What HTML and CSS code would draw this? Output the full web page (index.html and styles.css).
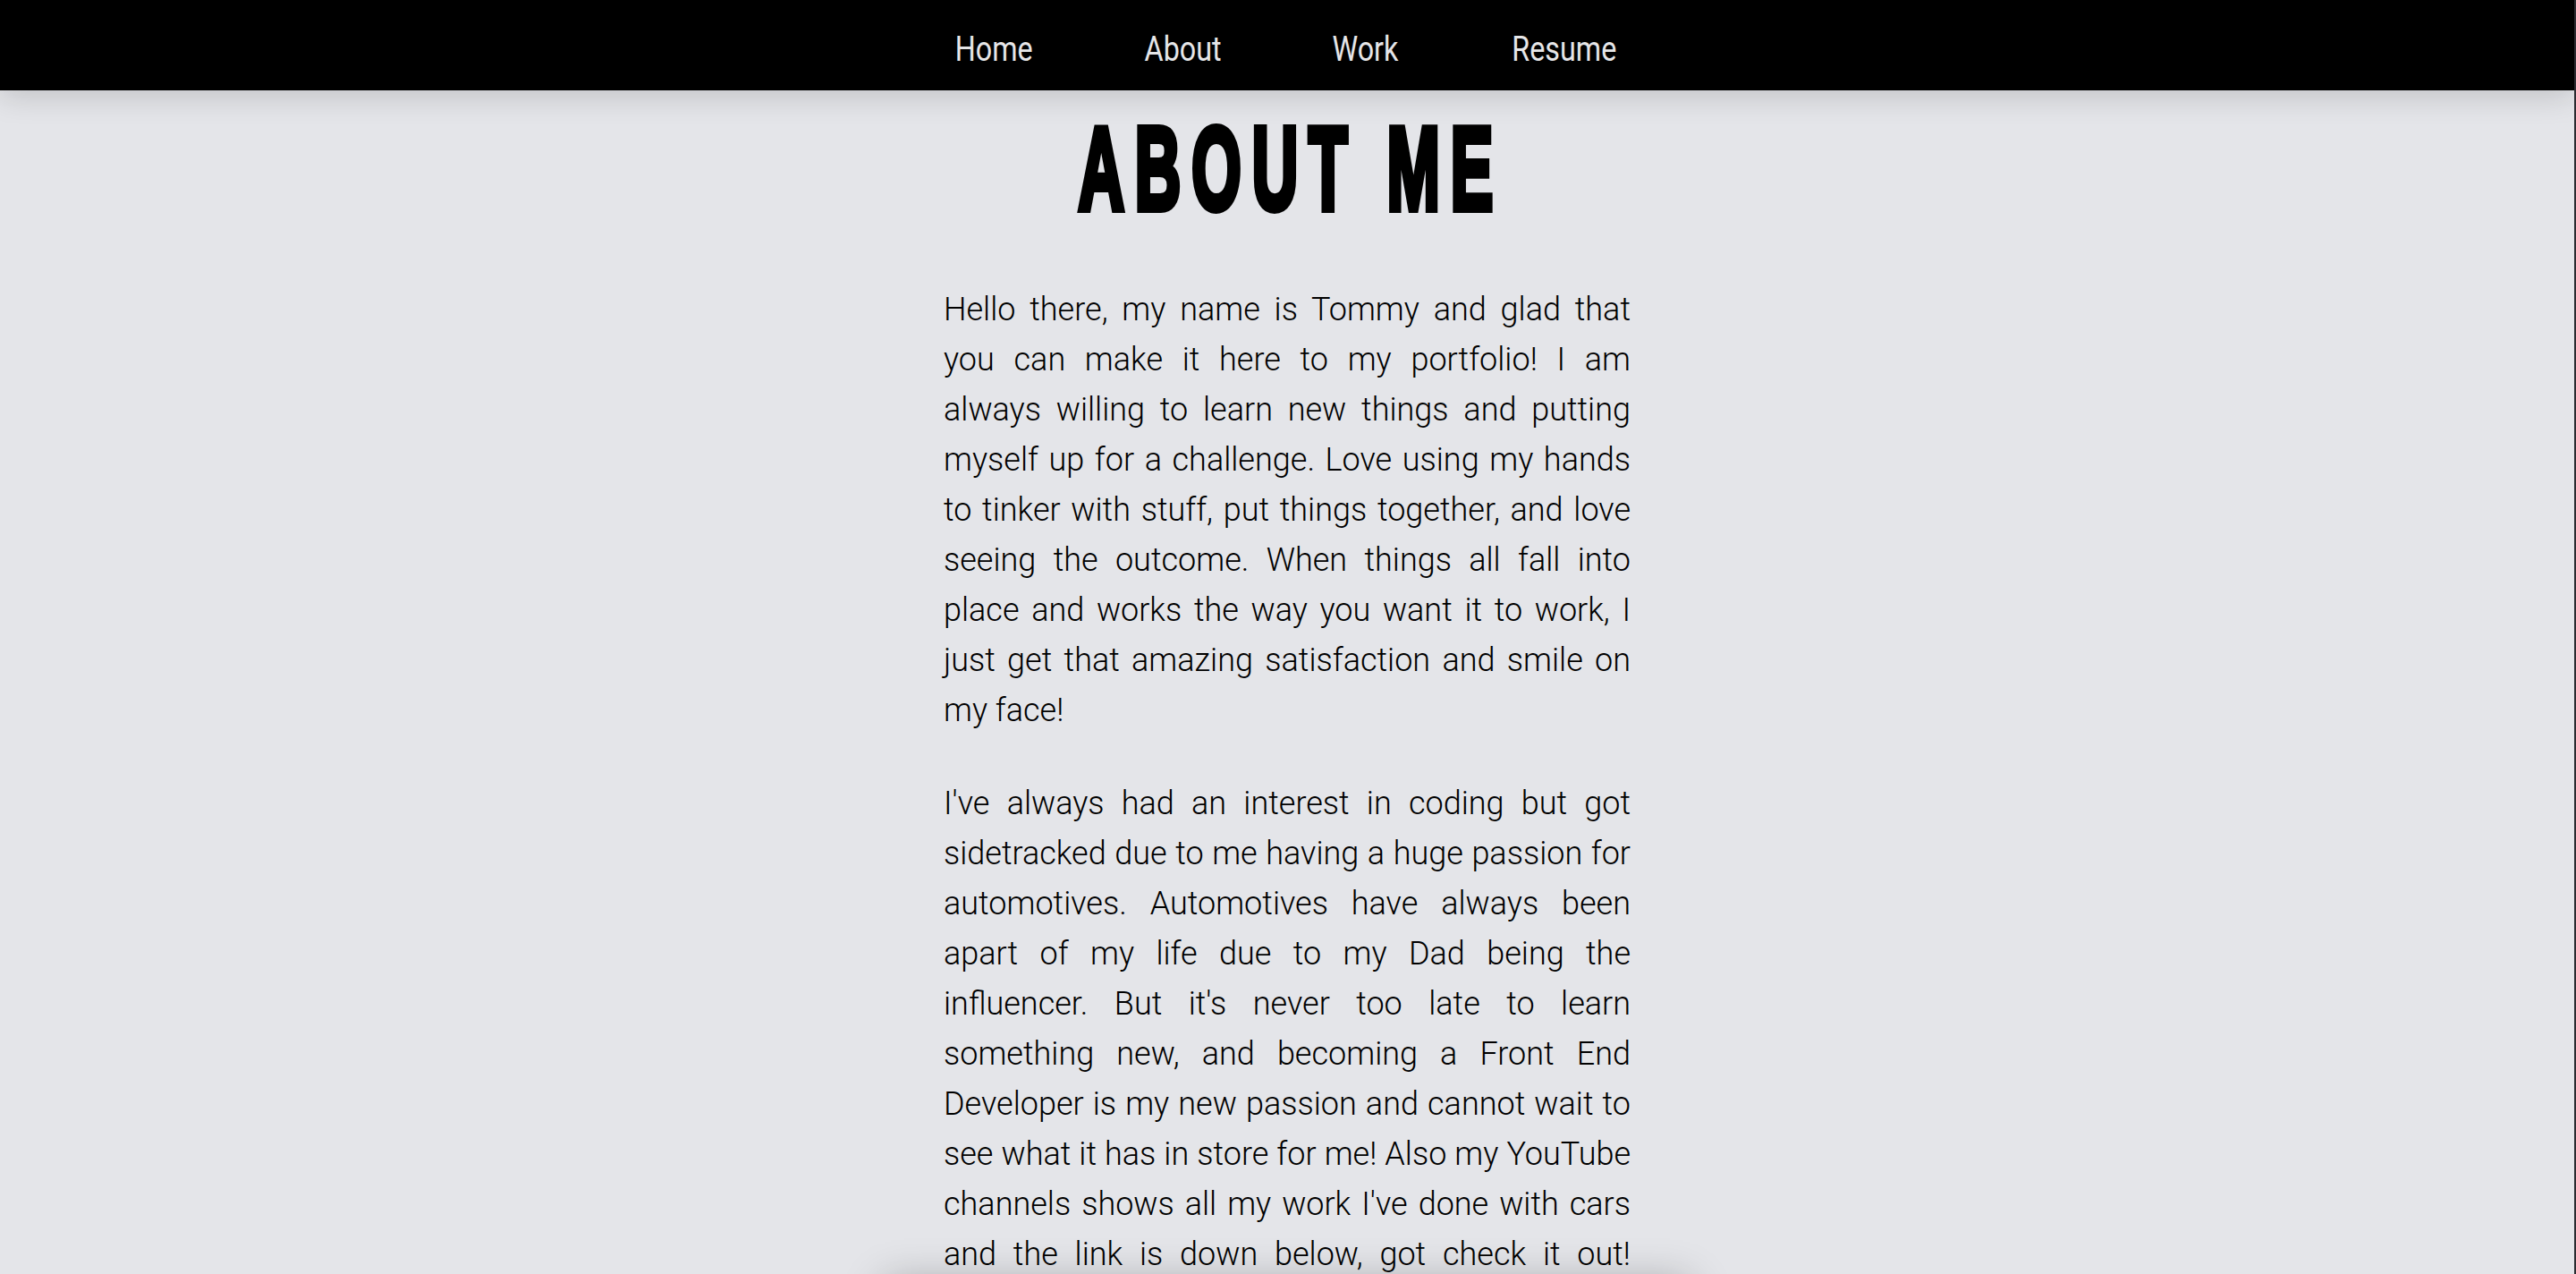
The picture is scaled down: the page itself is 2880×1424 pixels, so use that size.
FILE: index.html
```html
<!DOCTYPE html>
<html lang="en">
<head>
<meta charset="utf-8">
<title>About Me</title>
<link rel="stylesheet" href="styles.css">
</head>
<body>
<header class="site-header">
  <nav class="nav">
    <a class="nav-link" href="#">Home</a>
    <a class="nav-link" href="#">About</a>
    <a class="nav-link" href="#">Work</a>
    <a class="nav-link" href="#">Resume</a>
  </nav>
</header>
<main class="about">
  <h1 class="about-title"><span class="about-title-text">ABOUT ME</span></h1>
  <div class="about-text">
    <p class="about-para">Hello there, my name is Tommy and glad that you can make it here to my portfolio! I am always willing to learn new things and putting myself up for a challenge. Love using my hands to tinker with stuff, put things together, and love seeing the outcome. When things all fall into place and works the way you want it to work, I just get that amazing satisfaction and smile on my face!</p>
    <p class="about-para about-para-last">I've always had an interest in coding but got sidetracked due to me having a huge passion for automotives. Automotives have always been apart of my life due to my Dad being the influencer. But it's never too late to learn something new, and becoming a Front End Developer is my new passion and cannot wait to see what it has in store for me! Also my YouTube channels shows all my work I've done with cars and the link is down below, got check it out!</p>
  </div>
  <div class="video-card"></div>
</main>
</body>
</html>
```

FILE: styles.css
```css
html {
  background: #2b2c31;
}
body {
  margin: 0 2px 0 0;
  min-height: 100vh;
  background: #e4e5e9;
  overflow: hidden;
}
.site-header {
  position: relative;
  z-index: 2;
  height: 101px;
  box-sizing: border-box;
  padding-top: 9px;
  background: #000;
  display: flex;
  align-items: center;
  justify-content: center;
  box-shadow: 0 6px 34px rgba(0, 0, 0, 0.16);
}
.nav {
  display: flex;
  gap: 110px;
}
.nav-link {
  display: inline-block;
  font-family: "Roboto", sans-serif;
  font-weight: 400;
  font-size: 38px;
  line-height: 44px;
  color: #e6e6e8;
  text-decoration: none;
  transform: scaleX(0.85);
}
.about {
  display: flex;
  flex-direction: column;
  align-items: center;
  padding-top: 22px;
}
.about-title {
  margin: 0;
  font-family: "Liberation Sans", sans-serif;
  font-weight: 700;
  font-size: 131px;
  line-height: 131px;
  color: #000;
}
.about-title-text {
  display: inline-block;
  margin-left: 9px;
  letter-spacing: 22px;
  -webkit-text-stroke: 8px #000;
  transform: scaleX(0.544);
}
.about-text {
  width: 768px;
  margin-top: 64px;
}
.about-para {
  margin: 0 0 48px;
  font-family: "Roboto", sans-serif;
  font-weight: 300;
  font-size: 36px;
  line-height: 56px;
  color: #000;
  text-align: justify;
}
.about-para-last {
  text-align-last: justify;
  margin-bottom: 0;
}
.video-card {
  width: 900px;
  height: 400px;
  margin-top: 4px;
  background: #e4e5e9;
  box-shadow: 0 0 44px rgba(0, 0, 0, 0.3);
}
```
